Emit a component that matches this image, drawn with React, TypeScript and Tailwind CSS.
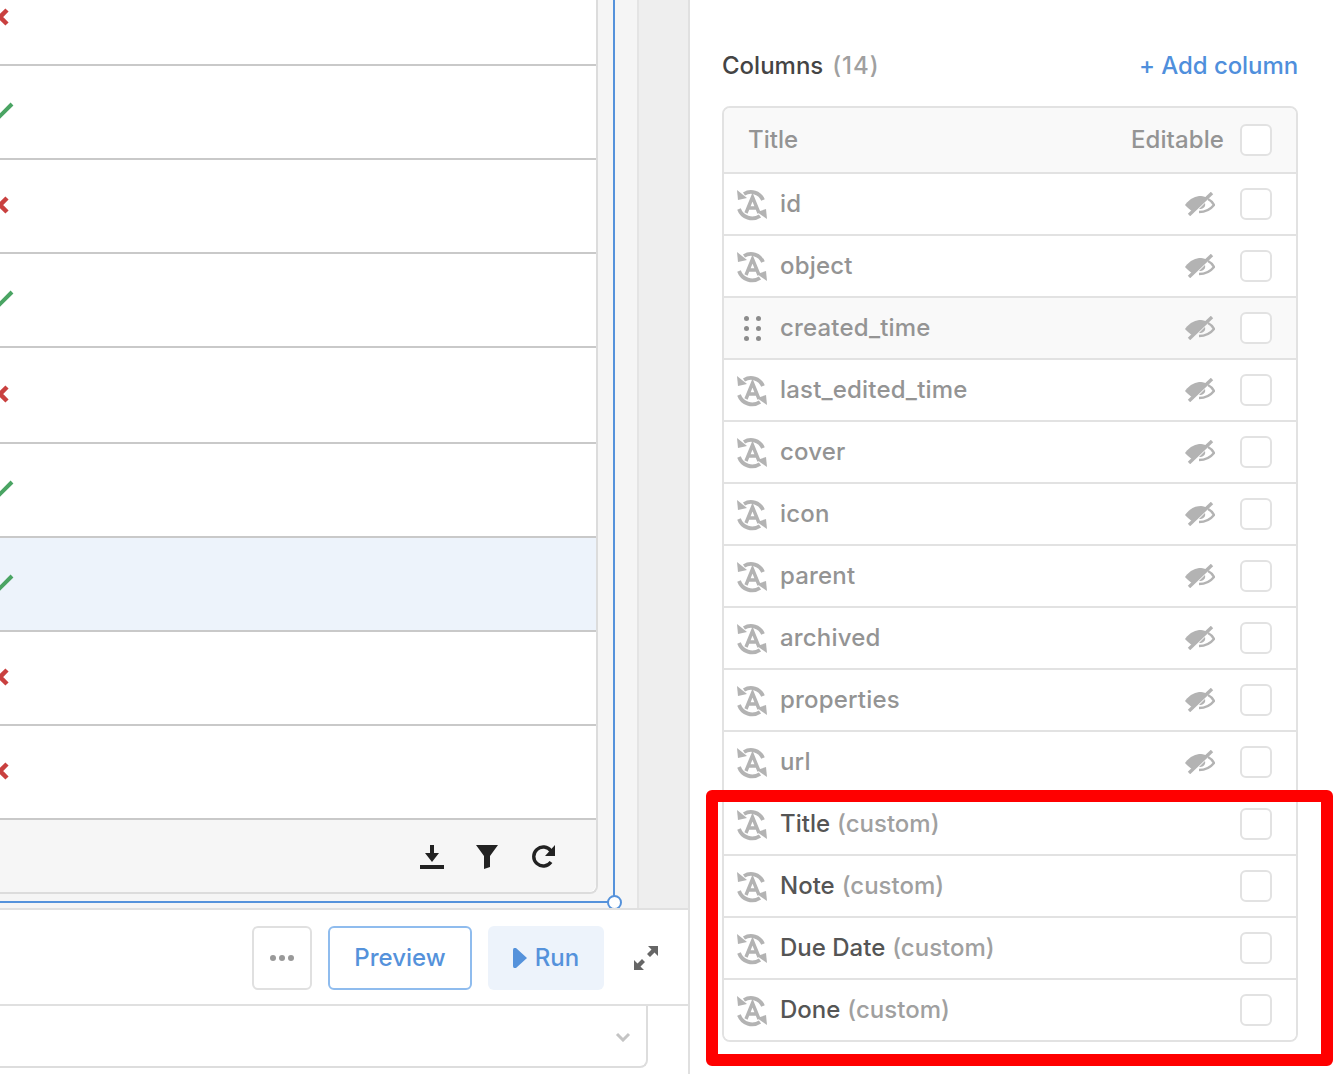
const rows: { h: number; ok: boolean; selected?: boolean }[] = [
  { h: 94, ok: false },
  { h: 94, ok: true },
  { h: 94, ok: false },
  { h: 94, ok: true },
  { h: 96, ok: false },
  { h: 94, ok: true },
  { h: 94, ok: true, selected: true },
  { h: 94, ok: false },
  { h: 94, ok: false },
];

const columns = [
  "id",
  "object",
  "created_time",
  "last_edited_time",
  "cover",
  "icon",
  "parent",
  "archived",
  "properties",
  "url",
];

const customColumns = ["Title", "Note", "Due Date", "Done"];

const MappedIcon = () => (
  <svg width="30" height="33" viewBox="0 0 30 33" fill="none" className="shrink-0">
    <path d="M26 12A13 13 0 0 0 7 6" stroke="#b3b3b3" strokeWidth="3.800" />
    <path d="M0 2L1 12L10 10Z" fill="#b3b3b3" />
    <path d="M2 21A14 14 0 0 0 23 28" stroke="#b3b3b3" strokeWidth="3.800" />
    <path d="M30 31L29 21L20 24Z" fill="#b3b3b3" />
    <path d="M9 25L15.500 9L22 25M11.500 20H19.500" stroke="#b3b3b3" strokeWidth="3.400" />
  </svg>
);

const EyeOff = () => (
  <svg width="30" height="24" viewBox="0 0 30 24" fill="none" className="shrink-0">
    <path d="M0 13C5 6 11 4 16 4C18 4 21 5 23 6L8 20C5 18 2 15 0 13Z" fill="#b3b3b3" />
    <path d="M23 7C25 8 28 11 29 13C25 18 20 20 14 20" stroke="#b3b3b3" strokeWidth="2.400" />
    <path d="M20 11C21 15 18 17 14 17Z" fill="#b3b3b3" />
    <path d="M4 23L27 1" stroke="#b3b3b3" strokeWidth="3.400" />
  </svg>
);

const Checkbox = () => (
  <div className="w-8 h-8 shrink-0 rounded-md border-2 border-[#e2e2e2] bg-white" />
);

const ColumnRow = ({ name }: { name: string }) => (
  <div
    className={`h-[62px] flex items-center pr-6 border-b-2 border-[#e2e2e2] ${
      name === "created_time" ? "bg-[#f9f9f9]" : "bg-white"
    }`}
  >
    <div className="w-[56px] flex justify-center pr-[1px] shrink-0">
      {name === "created_time" ? (
        <div className="grid grid-cols-2 gap-x-[7px] gap-y-[5px] pl-[1px]">
          {[0, 1, 2, 3, 4, 5].map((d) => (
            <div key={d} className="w-[5px] h-[5px] rounded-full bg-[#8c8c8c]" />
          ))}
        </div>
      ) : (
        <MappedIcon />
      )}
    </div>
    <span className="text-[#949494] tracking-[0.18px]">{name}</span>
    <div className="ml-auto flex items-center gap-[25px]">
      <EyeOff />
      <Checkbox />
    </div>
  </div>
);

const CustomRow = ({ name }: { name: string }) => (
  <div className="h-[62px] last:h-[60px] flex items-center pr-6 border-b-2 border-[#e2e2e2] last:border-b-0 bg-white">
    <div className="w-[56px] flex justify-center pr-[1px] shrink-0">
      <MappedIcon />
    </div>
    <span className="text-[#555555]">{name}</span>
    <span className="text-[#a0a0a0] ml-[7px]">(custom)</span>
    <div className="ml-auto">
      <Checkbox />
    </div>
  </div>
);

const App = () => {
  return (
    <div className="relative w-[1338px] h-[1074px] overflow-hidden flex bg-white text-[24px] font-medium font-[Inter,sans-serif]">
      <div className="w-[690px] h-full shrink-0 flex flex-col border-r-2 border-[#e0e0e0]">
        <div className="relative h-[910px] shrink-0 flex bg-[#f5f5f5] border-b-2 border-[#e0e0e0] overflow-hidden">
          <div className="w-[598px] shrink-0 -mt-[28px] flex flex-col h-[922px] bg-white border-r-2 border-b-2 border-[#dcdcdc] rounded-br-lg">
            {rows.map((row, i) => (
              <div
                key={i}
                style={{ height: row.h }}
                className={`flex items-center shrink-0 border-b-2 border-[#c9c9c9] ${
                  row.selected ? "bg-[#edf3fb]" : "bg-white"
                }`}
              >
                {row.ok ? (
                  <svg width="28" height="24" viewBox="0 0 28 24" fill="none" className="-ml-[14px]">
                    <path d="M3 14L9 21L26 4" stroke="#4aa463" strokeWidth="4" />
                  </svg>
                ) : (
                  <svg width="20" height="20" viewBox="0 0 20 20" fill="none" className="-ml-[10px] -mt-[2px]">
                    <path d="M3 3L17 17M17 3L3 17" stroke="#c9403f" strokeWidth="4.500" />
                  </svg>
                )}
              </div>
            ))}
            <div className="flex-1 bg-[#f6f6f6] rounded-br-lg flex items-center justify-end gap-[32px] pr-[40px] pt-[1px]">
              <svg width="24" height="24" viewBox="0 0 24 24" fill="#222222">
                <rect x="0" y="20" width="24" height="4" />
                <path d="M10 0H14V8H19L12 17L5 8H10Z" />
              </svg>
              <svg width="22" height="24" viewBox="0 0 22 24" fill="#222222">
                <path d="M0 0H22L14 11V22L8 24V11Z" />
              </svg>
              <svg width="24" height="24" viewBox="0 0 24 24" fill="none" className="ml-[2px]">
                <path d="M19 17A9.500 9.500 0 1 1 19 6" stroke="#222222" strokeWidth="3.400" />
                <path d="M23 0V11H13Z" fill="#222222" />
              </svg>
            </div>
          </div>
          <div className="w-[41px] shrink-0 border-r-2 border-[#e4e4e4]" />
          <div className="flex-1 bg-[#eeeeee]" />
          <div className="absolute left-0 top-[901px] w-[615px] h-[2px] bg-[#5592db]" />
          <div className="absolute left-[613px] top-0 w-[2px] h-[902px] bg-[#5592db]" />
          <div className="absolute left-[607px] top-[895px] w-[15px] h-[15px] rounded-full bg-white border-2 border-[#5592db]" />
        </div>
        <div className="h-[96px] shrink-0 flex items-center justify-end gap-4 pr-[30px] pt-[2px] border-b-2 border-[#e0e0e0]">
          <button className="w-[60px] h-16 rounded-md border-2 border-[#e0e0e0] flex items-center justify-center gap-[3px]">
            <span className="w-[6px] h-[6px] rounded-full bg-[#999999]" />
            <span className="w-[6px] h-[6px] rounded-full bg-[#999999]" />
            <span className="w-[6px] h-[6px] rounded-full bg-[#999999]" />
          </button>
          <button className="w-[144px] h-16 rounded-md border-2 border-[#8fbcee] text-[#5592db]">
            Preview
          </button>
          <button className="w-[116px] h-16 rounded-md bg-[#edf3fb] text-[#5592db] flex items-center justify-center gap-2">
            <svg width="14" height="20" viewBox="0 0 14 20" fill="#5592db">
              <path d="M0 2C0 0 2 -1 3 0L14 10L3 20C2 21 0 20 0 18Z" />
            </svg>
            Run
          </button>
          <svg width="24" height="24" viewBox="0 0 24 24" fill="#666666" className="ml-[14px]">
            <path d="M14 0H24V10L20.500 6.500L16 11L13 8L17.500 3.500Z" />
            <path d="M0 24V14L3.500 17.500L8 13L11 16L6.500 20.500L10 24Z" />
          </svg>
        </div>
        <div className="h-[62px] shrink-0 w-[648px] bg-white border-2 border-l-0 border-t-0 border-[#dddddd] rounded-br-lg flex items-center justify-end pr-[15px] pt-[2px]">
          <svg width="16" height="10" viewBox="0 0 16 10" fill="none">
            <path d="M2 2L8 8L14 2" stroke="#c4c4c4" strokeWidth="3" />
          </svg>
        </div>
      </div>
      <div className="flex-1 pl-[32px] pr-[40px] pt-[48px]">
        <div className="flex items-center justify-between h-9">
          <div>
            <span className="text-[#444444]">Columns</span>
            <span className="text-[#a0a0a0] ml-[9px] tracking-[1px]">(14)</span>
          </div>
          <span className="text-[#4f8fdc] tracking-[-0.08px]">+ Add column</span>
        </div>
        <div className="mt-[22px] rounded-lg border-2 border-[#e2e2e2] overflow-hidden">
          <div className="h-[66px] bg-[#f9f9f9] flex items-center pl-[24px] pr-6 border-b-2 border-[#e2e2e2] text-[#949494]">
            Title
            <span className="ml-auto mr-4 tracking-[0.1px]">Editable</span>
            <Checkbox />
          </div>
          {columns.map((c) => (
            <ColumnRow key={c} name={c} />
          ))}
          {customColumns.map((c) => (
            <CustomRow key={c} name={c} />
          ))}
        </div>
      </div>
      <div className="absolute left-[706px] top-[790px] w-[627px] h-[276px] border-[12px] border-[#ff0000] rounded-md" />
    </div>
  );
};

export default App;
